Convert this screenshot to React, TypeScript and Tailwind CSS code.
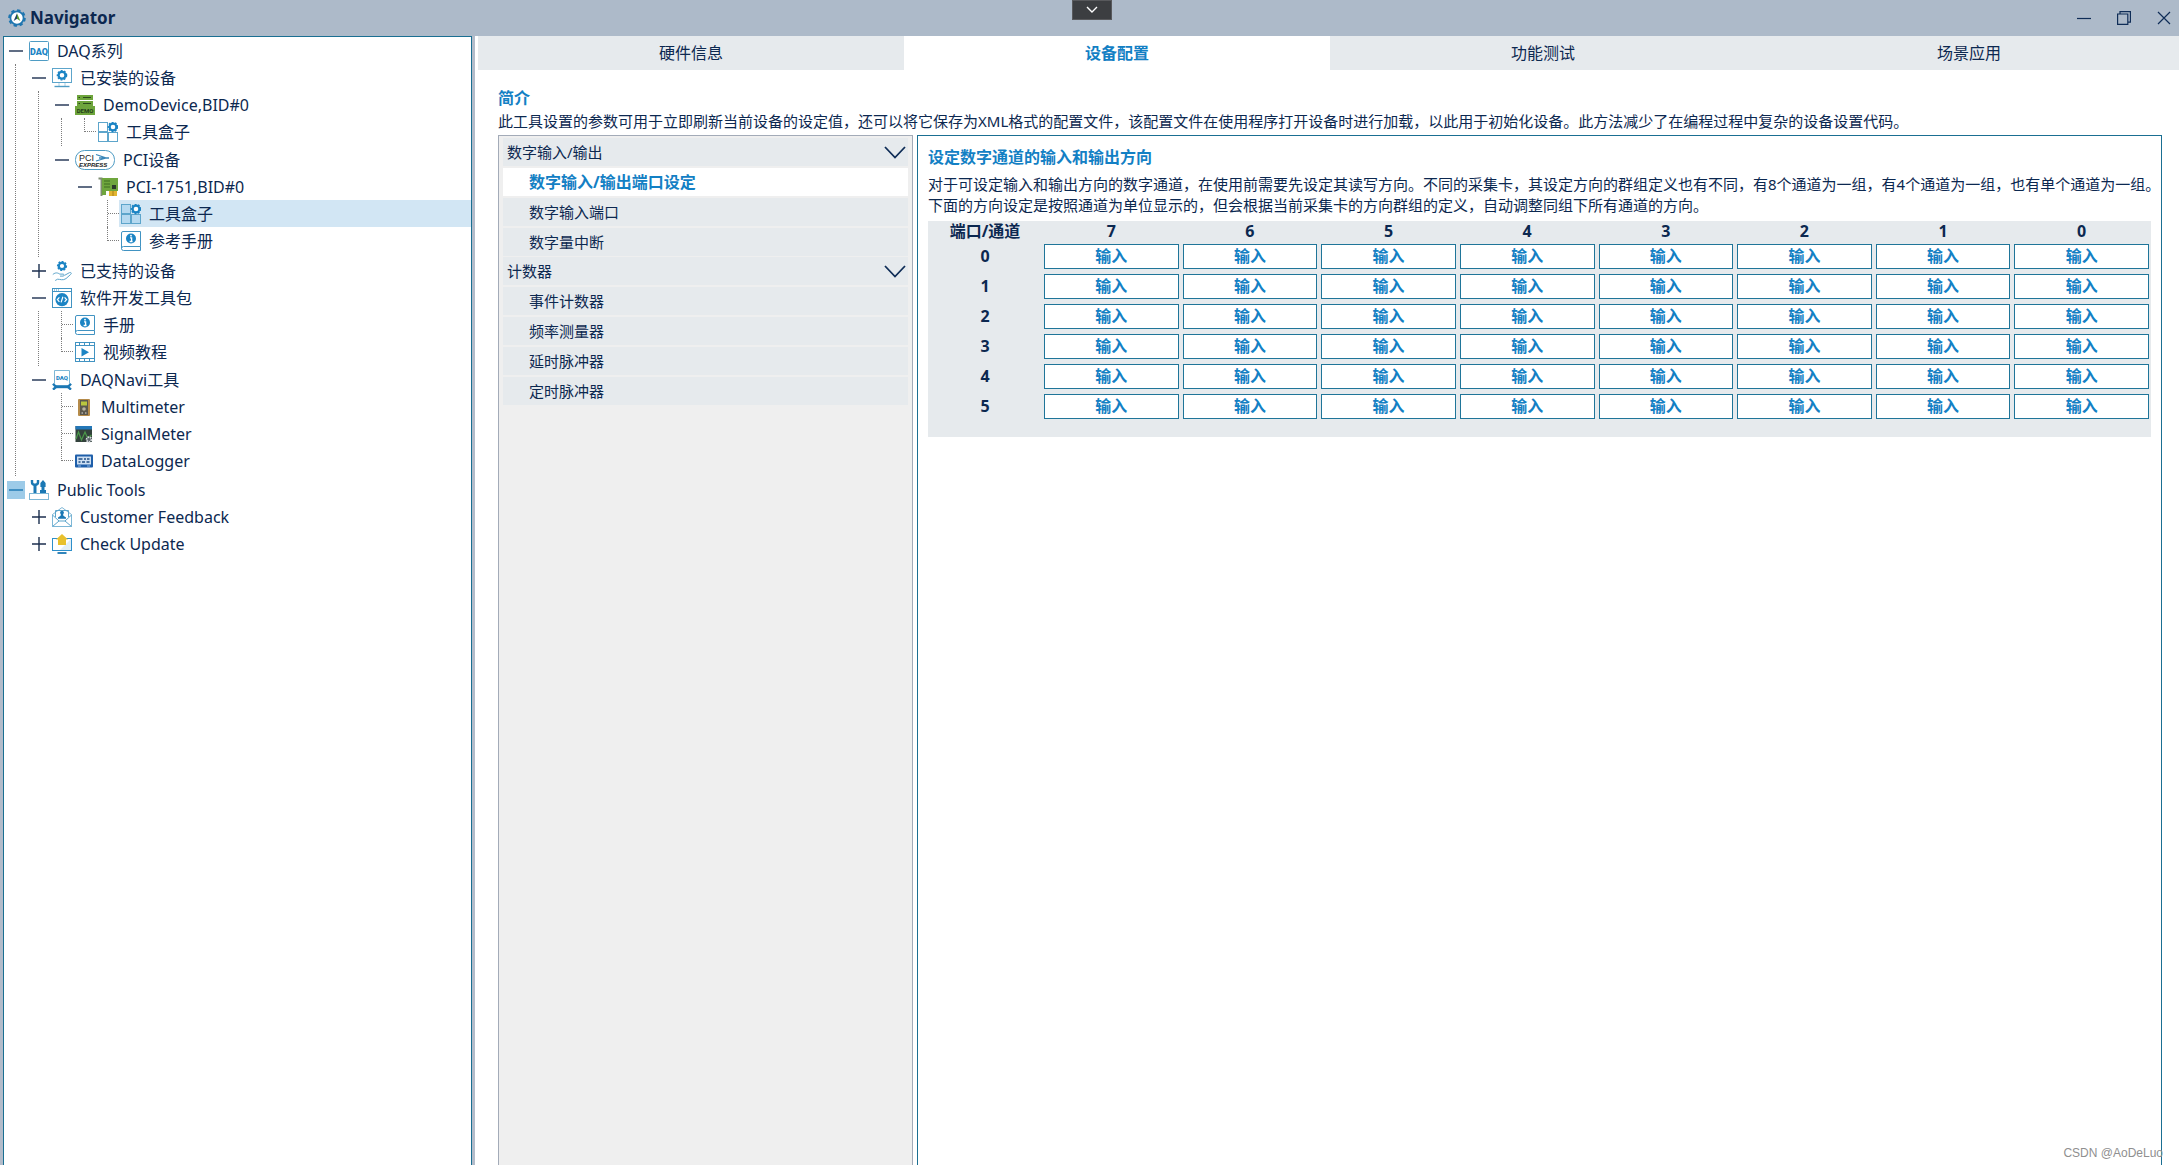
import { useState } from "react";
import type { ReactNode } from "react";

type TreeItem = {
  label: string;
  icon: ReactNode;
  selected?: boolean;
  focused?: boolean;
  collapsed?: boolean;
  children?: TreeItem[];
};

function Gear({ cx, cy, r }: { cx: number; cy: number; r: number }) {
  return (
    <g stroke="#1b84c4" fill="none">
      <circle cx={cx} cy={cy} r={r + 1.2} strokeWidth="1.4" strokeDasharray="1.9 1.4" />
      <circle cx={cx} cy={cy} r={r} strokeWidth="2.2" fill="#fff" />
    </g>
  );
}

function AppLogo() {
  return (
    <svg width="18" height="18" viewBox="0 0 18 18">
      <circle cx="9" cy="9" r="7.8" fill="none" stroke="#1f76b0" strokeWidth="2" strokeDasharray="3.4 2.7" />
      <circle cx="9" cy="9" r="6.6" fill="#fff" stroke="#1f76b0" strokeWidth="1.8" />
      <path d="M9 4.2 5.6 12l3.4-2.2z" fill="#1d3f63" />
      <path d="M9 4.2 12.4 12 9 9.8z" fill="#5a9a2e" />
    </svg>
  );
}

function DaqIcon() {
  return (
    <svg width="20" height="20" viewBox="0 0 20 20">
      <rect x="0.5" y="0.5" width="19" height="19" rx="1" fill="#fff" stroke="#4f9cc4" />
      <text x="10" y="13.5" textAnchor="middle" fontSize="9" fontWeight="900" fill="#1b84c4" fontFamily="Roboto, sans-serif">DAQ</text>
    </svg>
  );
}

function InstalledIcon() {
  return (
    <svg width="20" height="20" viewBox="0 0 20 20">
      <rect x="0.5" y="0.5" width="19" height="14" fill="#fff" stroke="#5da5cb" />
      <Gear cx={10} cy={7.3} r={3.4} />
      <path d="M7 15v3M13 15v3" stroke="#a8cfe4" />
      <path d="M2.5 18.5h15" stroke="#4f9cc4" strokeWidth="1.4" />
    </svg>
  );
}

function DemoIcon() {
  return (
    <svg width="20" height="20" viewBox="0 0 20 20">
      <rect x="2" y="0" width="16" height="5" fill="#6ea53c" />
      <rect x="2" y="6" width="16" height="5" fill="#6ea53c" />
      <path d="M3.5 2.5h1.5M3.5 8.5h1.5M8 2.5h8M8 8.5h8" stroke="#2c4a1c" />
      <rect x="0" y="11" width="20" height="9" fill="#6ea53c" />
      <text x="10" y="18" textAnchor="middle" fontSize="6" fontWeight="700" fill="#23401a" fontFamily="Roboto, sans-serif">DEMO</text>
    </svg>
  );
}

function ToolboxIcon({ tint = "#fff" }: { tint?: string }) {
  return (
    <svg width="20" height="20" viewBox="0 0 20 20">
      <g fill={tint} stroke="#5da5cb">
        <rect x="0.5" y="0.5" width="9" height="9" />
        <rect x="0.5" y="10.5" width="9" height="9" />
        <rect x="10.5" y="10.5" width="9" height="9" />
      </g>
      <Gear cx={15} cy={5} r={3.4} />
    </svg>
  );
}

function PciExpressIcon() {
  return (
    <svg width="40" height="20" viewBox="0 0 40 20">
      <rect x="0.5" y="0.5" width="39" height="19" rx="9" fill="#fff" stroke="#4f9cc4" />
      <text x="4" y="11" fontSize="9" fill="#222" fontFamily="Liberation Sans, sans-serif">PCI</text>
      <path d="M21 4.5l10 3.5-10 3M24 8h10" fill="none" stroke="#3b86b8" strokeWidth="1.3" />
      <text x="4" y="16.5" fontSize="6" fontWeight="700" fontStyle="italic" fill="#222" fontFamily="Liberation Sans, sans-serif">EXPRESS</text>
    </svg>
  );
}

function CardIcon() {
  return (
    <svg width="20" height="20" viewBox="0 0 20 20">
      <path d="M0.5 1.5h3V19" fill="none" stroke="#7f8d72" strokeWidth="2" />
      <rect x="4" y="1" width="16" height="13" fill="#6fa63d" />
      <path d="M6 4h6M6 7h6M6 10h6" stroke="#3f6d22" />
      <rect x="14" y="8" width="4" height="4" fill="#2b3a2a" />
      <path d="M4 14h4v4H4z" fill="#6fa63d" />
      <path d="M11 14h8v5h-8z" fill="#e2b530" />
      <path d="M15 14v5" stroke="#a97f18" />
    </svg>
  );
}

function BookIcon() {
  return (
    <svg width="20" height="20" viewBox="0 0 20 20">
      <path d="M2 0.5h17.5v15H2.5a2 2 0 0 0 0 4h17v-4" fill="#fff" stroke="#4193c2" />
      <path d="M0.5 17.5V2A1.5 1.5 0 0 1 2 0.5" fill="none" stroke="#4193c2" />
      <circle cx="10" cy="7.5" r="5" fill="#1b84c4" />
      <path d="M9 6.8h1.6v3.6M8.6 10.5h3" stroke="#fff" strokeWidth="1.3" fill="none" />
      <circle cx="10" cy="4.7" r="0.9" fill="#fff" />
    </svg>
  );
}

function SupportedIcon() {
  return (
    <svg width="20" height="20" viewBox="0 0 20 20">
      <Gear cx={10} cy={5} r={3.2} />
      <path d="M0.8 13.5c3-2.5 5-1.6 7-.4h3.4c1.2.2 1.2 1.8 0 2H8M12.5 14.4l5-2.8c1.6-.6 2.4.8 1.2 1.8L14 17.6c-3 2.2-6 .6-8.4.6l-2.4 1.3" fill="none" stroke="#5da5cb" />
    </svg>
  );
}

function SdkIcon() {
  return (
    <svg width="20" height="20" viewBox="0 0 20 20">
      <rect x="0.5" y="0.5" width="19" height="19" fill="#fff" stroke="#4193c2" />
      <path d="M0.5 3.5h19M2 2h1M4 2h1M6 2h1" stroke="#4193c2" />
      <circle cx="10" cy="11.6" r="6.6" fill="#1b84c4" />
      <path d="M7.4 9.4 5.4 11.6l2 2.2M12.6 9.4l2 2.2-2 2.2M10.9 8.8l-1.8 5.6" fill="none" stroke="#fff" strokeWidth="1.2" />
    </svg>
  );
}

function VideoIcon() {
  return (
    <svg width="20" height="20" viewBox="0 0 20 20">
      <rect x="0.5" y="0.5" width="19" height="19" fill="#fff" stroke="#4193c2" />
      <path d="M0 3.5h20M0 16.5h20" stroke="#4193c2" />
      <path d="M4.5 0v3M9.5 0v3M14.5 0v3M4.5 17v3M9.5 17v3M14.5 17v3" stroke="#4193c2" />
      <path d="M6.5 6v8.5l7.5-4.2z" fill="#1b84c4" />
    </svg>
  );
}

function DaqNaviIcon() {
  return (
    <svg width="20" height="20" viewBox="0 0 20 20">
      <path d="M2.5 13.5V0.5h15v13" fill="#fff" stroke="#7db7d6" />
      <text x="10" y="9.5" textAnchor="middle" fontSize="6" fontWeight="900" fill="#1b84c4" fontFamily="Roboto, sans-serif">DAQ</text>
      <path d="M3.5 16.7h13" stroke="#1b78b4" strokeWidth="3" />
      <path d="M1 13.8l3 3.2-3 2.6M19 13.8L16 17l3 2.6" fill="none" stroke="#1b78b4" strokeWidth="2.4" />
    </svg>
  );
}

function MultimeterIcon() {
  return (
    <svg width="18" height="18" viewBox="0 0 18 18">
      <rect x="3" y="1" width="12" height="17" rx="1" fill="#b58b4a" />
      <rect x="5" y="2" width="8" height="15" fill="#5a584e" />
      <rect x="6" y="3.5" width="6" height="4" fill="#b9c63e" />
      <circle cx="9" cy="11" r="1.8" fill="#b8b2a0" />
      <path d="M6.5 15h1.5M10 15h1.5" stroke="#ddd" />
    </svg>
  );
}

function SignalIcon() {
  return (
    <svg width="18" height="18" viewBox="0 0 18 18">
      <rect x="0.5" y="1" width="16.5" height="16" fill="#33423c" />
      <rect x="0.5" y="1" width="16.5" height="3.5" fill="#2377b8" />
      <path d="M1 14l2.5-7 3 8 3.5-8 2.5 6 4-3" fill="none" stroke="#4c9a4a" strokeWidth="1.2" />
      <circle cx="14" cy="14.5" r="2.4" fill="#5b646a" stroke="#d6dade" strokeWidth="1.8" strokeDasharray="1.5 .7" />
    </svg>
  );
}

function LoggerIcon() {
  return (
    <svg width="18" height="18" viewBox="0 0 18 18">
      <rect x="0" y="2.5" width="18" height="13" rx="1" fill="#1f5faa" />
      <rect x="2" y="4.5" width="14" height="8" fill="#cfe0f2" />
      <path d="M3.5 7h4M9 7h2M12 7h2.5M3.5 10h2M7 10h3M11.5 10h3" stroke="#1f4d86" strokeWidth="1.4" />
      <path d="M3 14h3M12 14h3" stroke="#8fb6e0" />
    </svg>
  );
}

function PublicToolsIcon() {
  return (
    <svg width="20" height="20" viewBox="0 0 20 20">
      <rect x="0.5" y="13.5" width="19" height="6" fill="#fff" stroke="#7db7d6" />
      <path d="M6 4.5V13" stroke="#1b78b4" strokeWidth="3" />
      <path d="M3 0v2.2a3 2.6 0 0 0 6 0V0" fill="none" stroke="#1b78b4" strokeWidth="2.4" />
      <path d="M14 0l2.6 3v4h-5.2V3zM12.5 7h3v3h1.5v3h-6v-3h1.5z" fill="#1b78b4" />
    </svg>
  );
}

function FeedbackIcon() {
  return (
    <svg width="20" height="20" viewBox="0 0 20 20">
      <path d="M0.5 7.5 10 0.5l9.5 7v12H0.5z" fill="#fff" stroke="#7db7d6" />
      <path d="M3.5 10V3.5h13V10M0.5 8l6.5 6h6l6.5-6M0.5 19.5 7 14M19.5 19.5 13 14" fill="none" stroke="#5da5cb" />
      <circle cx="10" cy="5.6" r="1.9" fill="#1b78b4" />
      <path d="M9 6.5h2l.4 2.3 2.6 1.6v1.4H6v-1.4l2.6-1.6z" fill="#1b78b4" />
    </svg>
  );
}

function UpdateIcon() {
  return (
    <svg width="20" height="20" viewBox="0 0 20 20">
      <rect x="0.5" y="4.5" width="19" height="12" fill="#fff" stroke="#2d8fca" />
      <path d="M19 5v11H8z" fill="#e1eef7" />
      <path d="M10 0l6 5.5h-2V11H6V5.5H4z" fill="#e8c02c" />
      <path d="M5.5 19h9" stroke="#1b78b4" strokeWidth="1.8" />
    </svg>
  );
}

const TREE: TreeItem[] = [
  {
    label: "DAQ系列",
    icon: <DaqIcon />,
    children: [
      {
        label: "已安装的设备",
        icon: <InstalledIcon />,
        children: [
          { label: "DemoDevice,BID#0", icon: <DemoIcon />, children: [{ label: "工具盒子", icon: <ToolboxIcon /> }] },
          {
            label: "PCI设备",
            icon: <PciExpressIcon />,
            children: [
              {
                label: "PCI-1751,BID#0",
                icon: <CardIcon />,
                children: [
                  { label: "工具盒子", icon: <ToolboxIcon tint="#b5d9f0" />, selected: true },
                  { label: "参考手册", icon: <BookIcon /> },
                ],
              },
            ],
          },
        ],
      },
      { label: "已支持的设备", icon: <SupportedIcon />, collapsed: true },
      {
        label: "软件开发工具包",
        icon: <SdkIcon />,
        children: [
          { label: "手册", icon: <BookIcon /> },
          { label: "视频教程", icon: <VideoIcon /> },
        ],
      },
      {
        label: "DAQNavi工具",
        icon: <DaqNaviIcon />,
        children: [
          { label: "Multimeter", icon: <MultimeterIcon /> },
          { label: "SignalMeter", icon: <SignalIcon /> },
          { label: "DataLogger", icon: <LoggerIcon /> },
        ],
      },
    ],
  },
  {
    label: "Public Tools",
    icon: <PublicToolsIcon />,
    focused: true,
    children: [
      { label: "Customer Feedback", icon: <FeedbackIcon />, collapsed: true },
      { label: "Check Update", icon: <UpdateIcon />, collapsed: true },
    ],
  },
];

function TreeNode({ item, last }: { item: TreeItem; last: boolean }) {
  const [open, setOpen] = useState(!item.collapsed);
  const isBranch = !!item.children || !!item.collapsed;

  return (
    <li>
      <div className="flex h-[27px]">
        {isBranch ? (
          <div className="flex w-[23px] shrink-0 items-center justify-center">
            <button
              type="button"
              aria-label={item.label}
              aria-expanded={open}
              onClick={() => setOpen(!open)}
              className={`flex size-[18px] items-center justify-center ${item.focused ? "bg-[#9dcbe8] text-[#1b78b4]" : "text-[#1c2f4f]"}`}
            >
              <svg width="14" height="14" viewBox="0 0 14 14" stroke="currentColor" strokeWidth="1.4">
                <path d={open ? "M0 7h14" : "M0 7h14M7 0v14"} />
              </svg>
            </button>
          </div>
        ) : (
          <div className="flex w-[23px] shrink-0">
            <div className={`w-3 border-r border-dotted border-[#7d7d7d] ${last ? "h-[14px]" : "h-full"}`} />
            <div className="h-[14px] grow border-b border-dotted border-[#7d7d7d]" />
          </div>
        )}
        <div className={`flex grow items-center gap-2 pl-[2px] whitespace-nowrap ${item.selected ? "bg-[#d2e6f4]" : ""}`}>
          {item.icon}
          <span>{item.label}</span>
        </div>
      </div>
      {item.children && open && (
        <div className="flex">
          <div className="w-[23px] shrink-0">
            {!last && <div className="h-full w-3 border-r border-dotted border-[#7d7d7d]" />}
          </div>
          <TreeList items={item.children} />
        </div>
      )}
    </li>
  );
}

function TreeList({ items }: { items: TreeItem[] }) {
  return (
    <ul className="grow pb-px">
      {items.map((item, i) => (
        <TreeNode key={item.label + i} item={item} last={i === items.length - 1} />
      ))}
    </ul>
  );
}

const TABS = ["硬件信息", "设备配置", "功能测试", "场景应用"];

const MENU = [
  { title: "数字输入/输出", items: ["数字输入/输出端口设定", "数字输入端口", "数字量中断"] },
  { title: "计数器", items: ["事件计数器", "频率测量器", "延时脉冲器", "定时脉冲器"] },
];

const CHANNELS = [7, 6, 5, 4, 3, 2, 1, 0];
const PORTS = [0, 1, 2, 3, 4, 5];

function TitleBar() {
  return (
    <header className="relative flex h-9 shrink-0 items-center justify-between bg-[#adbac9] px-2">
      <h1 className="flex items-center gap-1 text-[17px] font-bold">
        <AppLogo />
        Navigator
      </h1>
      <button
        type="button"
        aria-label="展开"
        className="absolute top-0 left-1/2 flex h-5 w-10 -translate-x-[18px] items-center justify-center border border-[#58595c] bg-[#3c3e41]"
      >
        <svg width="12" height="8" viewBox="0 0 12 8" fill="none" stroke="#fff" strokeWidth="1.4">
          <path d="M1 1l5 5 5-5" />
        </svg>
      </button>
      <div className="flex gap-[26px]">
        <button type="button" aria-label="最小化">
          <svg width="14" height="14" viewBox="0 0 14 14" stroke="#0f2d57" strokeWidth="1.2">
            <path d="M0 7.5h14" />
          </svg>
        </button>
        <button type="button" aria-label="还原">
          <svg width="14" height="14" viewBox="0 0 14 14" fill="none" stroke="#0f2d57" strokeWidth="1.2">
            <path d="M0.6 3h10.2v10.4H0.6zM3 3V0.6h10.4v10.6h-2.6" />
          </svg>
        </button>
        <button type="button" aria-label="关闭">
          <svg width="14" height="14" viewBox="0 0 14 14" stroke="#0f2d57" strokeWidth="1.2">
            <path d="M1 1l12 12M13 1L1 13" />
          </svg>
        </button>
      </div>
    </header>
  );
}

function SideMenu() {
  return (
    <nav className="flex w-[415px] shrink-0 flex-col gap-px border border-b-0 border-[#a3abb8] bg-[#efefef] px-1 pt-[2px]">
      {MENU.map((group, g) => (
        <section key={group.title} className="flex flex-col gap-[2px]">
          <button type="button" className="flex h-7 items-center justify-between bg-[#e6eaed] pr-[2px] pl-1">
            {group.title}
            <svg width="22" height="13" viewBox="0 0 22 13" fill="none" stroke="#0f2d57" strokeWidth="1.8">
              <path d="M1 1l10 10.5L21 1" />
            </svg>
          </button>
          {group.items.map((label, i) =>
            g === 0 && i === 0 ? (
              <button key={label} type="button" className="h-7 bg-white pl-[26px] text-left text-base font-bold text-[#1380c4]">
                {label}
              </button>
            ) : (
              <button key={label} type="button" className="h-7 bg-[#e6eaed] pl-[26px] text-left">
                {label}
              </button>
            )
          )}
        </section>
      ))}
    </nav>
  );
}

function DirectionTable() {
  return (
    <div className="mt-[5px] bg-[#e6eaed] pb-4">
      <table className="w-full table-fixed text-center text-base">
        <thead>
          <tr className="h-5 leading-5">
            <th className="w-[114px] font-bold">端口/通道</th>
            {CHANNELS.map((channel) => (
              <th key={channel} className="font-bold">{channel}</th>
            ))}
          </tr>
        </thead>
        <tbody>
          {PORTS.map((port) => (
            <tr key={port} className="h-[30px]">
              <th className="font-bold">{port}</th>
              {CHANNELS.map((channel) => (
                <td key={channel} className="px-[2px]">
                  <button type="button" className="block h-[25px] w-full border border-[#1f7599] bg-white leading-[23px] font-bold text-[#1380c4]">
                    输入
                  </button>
                </td>
              ))}
            </tr>
          ))}
        </tbody>
      </table>
    </div>
  );
}

export default function App() {
  return (
    <div className="relative flex h-screen flex-col overflow-hidden bg-white font-['Noto_Sans','Noto_Sans_CJK_SC',sans-serif] text-base text-[#0c2850]">
      <TitleBar />
      <div className="flex min-h-0 grow">
        <aside className="flex w-[475px] shrink-0 bg-[#b3bcca] px-[3px]">
          <div className="grow border border-b-0 border-[#1a6f92] bg-white">
            <TreeList items={TREE} />
          </div>
        </aside>
        <main className="flex min-w-0 grow flex-col pl-[3px]">
          <div role="tablist" className="-mr-[3px] grid h-[34px] shrink-0 grid-cols-4">
            {TABS.map((tab, i) => (
              <button
                key={tab}
                type="button"
                role="tab"
                aria-selected={i === 1}
                className={i === 1 ? "bg-white font-bold text-[#1380c4]" : "bg-[#e6eaed]"}
              >
                {tab}
              </button>
            ))}
          </div>
          <div className="flex min-h-0 grow flex-col pt-4 pr-[17px] pl-5 text-[15px] leading-[21px]">
            <h2 className="mb-px text-base leading-6 font-bold text-[#1380c4]">简介</h2>
            <p className="mb-[3px] whitespace-nowrap">
              此工具设置的参数可用于立即刷新当前设备的设定值，还可以将它保存为XML格式的配置文件，该配置文件在使用程序打开设备时进行加载，以此用于初始化设备。此方法减少了在编程过程中复杂的设备设置代码。
            </p>
            <div className="flex min-h-0 grow gap-1">
              <SideMenu />
              <section className="min-w-0 grow border border-b-0 border-[#1a6f92] px-[10px] pt-[9px]">
                <h3 className="mb-[5px] text-base leading-6 font-bold text-[#1380c4]">设定数字通道的输入和输出方向</h3>
                <p className="whitespace-nowrap">
                  对于可设定输入和输出方向的数字通道，在使用前需要先设定其读写方向。不同的采集卡，其设定方向的群组定义也有不同，有8个通道为一组，有4个通道为一组，也有单个通道为一组。
                  <br />
                  下面的方向设定是按照通道为单位显示的，但会根据当前采集卡的方向群组的定义，自动调整同组下所有通道的方向。
                </p>
                <DirectionTable />
              </section>
            </div>
          </div>
        </main>
      </div>
      <span className="absolute right-4 bottom-1 font-['Liberation_Sans',sans-serif] text-xs text-[#8f8f8f]">CSDN @AoDeLuo</span>
    </div>
  );
}
